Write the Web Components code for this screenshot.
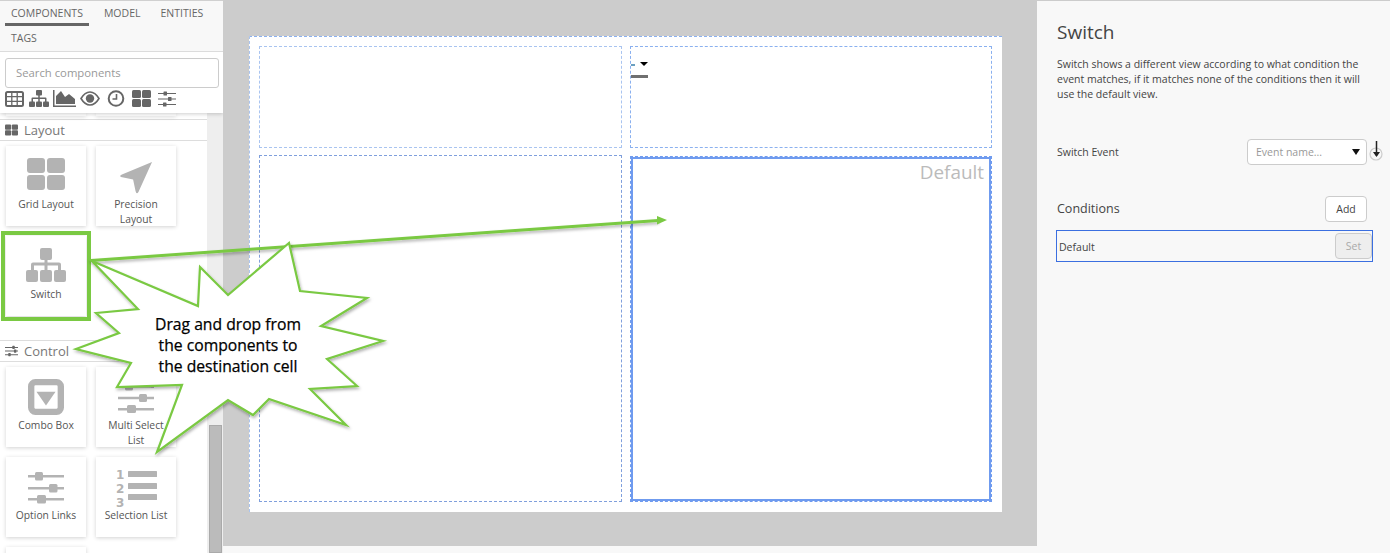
<!DOCTYPE html>
<html>
<head>
<meta charset="utf-8">
<title>Switch</title>
<style>
  html, body { margin: 0; height: 100%; }
  body { overflow: hidden; font-family: "Open Sans", "Liberation Sans", sans-serif; background: #f8f8f8; }
</style>
</head>
<body>
<app-shell>
  <comp-sidebar slot="left">
    <side-section label="Layout" icon="grid" slot="first">
      <comp-tile label="Grid Layout" icon="grid"></comp-tile>
      <comp-tile label="Precision Layout" icon="arrow"></comp-tile>
      <comp-tile label="Switch" icon="tree" picked></comp-tile>
    </side-section>
    <side-section label="Control" icon="sliders">
      <comp-tile label="Combo Box" icon="combo"></comp-tile>
      <comp-tile label="Multi Select List" icon="sliders2"></comp-tile>
      <comp-tile label="Option Links" icon="sliders3"></comp-tile>
      <comp-tile label="Selection List" icon="list"></comp-tile>
      <comp-tile label="" icon=""></comp-tile>
    </side-section>
  </comp-sidebar>
  <design-canvas slot="middle"></design-canvas>
  <prop-panel slot="right"></prop-panel>
</app-shell>
<drag-callout></drag-callout>

<script>
const ICONS = {
  grid: `<svg viewBox="0 0 38 32" fill="currentColor"><rect x="0" y="0" width="18" height="15" rx="3"/><rect x="20" y="0" width="18" height="15" rx="3"/><rect x="0" y="17" width="18" height="15" rx="3"/><rect x="20" y="17" width="18" height="15" rx="3"/></svg>`,
  arrow: `<svg viewBox="0 0 34 34" fill="currentColor"><path d="M33 1 L19 32 Q17 35 16 31 L13.500 19 L1 16.500 Q-1 15 2 14 Z"/></svg>`,
  tree: `<svg viewBox="0 0 40 34" fill="currentColor"><rect x="14" y="0" width="12" height="12" rx="2"/><rect x="0" y="22" width="12" height="12" rx="2"/><rect x="14" y="22" width="12" height="12" rx="2"/><rect x="28" y="22" width="12" height="12" rx="2"/><path d="M18.500 11h3v3.500H33q2 0 2 2V24h-3v-6.500H21.500V24h-3v-6.500H8V24H5v-7.500q0-2 2-2h11.500z"/></svg>`,
  combo: `<svg viewBox="0 0 34 34"><rect x="3" y="3" width="28" height="28" rx="4" fill="#fff" stroke="currentColor" stroke-width="6"/><path d="M8 12h18l-9 13z" fill="currentColor"/></svg>`,
  sliders: `<svg viewBox="0 0 16 14" fill="currentColor"><path d="M0 2h16v1.200H0zM0 6.500h16v1.200H0zM0 11h16v1.200H0z"/><rect x="9" y="0.500" width="3" height="4" rx=".6"/><rect x="11" y="5" width="3" height="4" rx=".6"/><rect x="4" y="9.500" width="3" height="4" rx=".6"/></svg>`,
  sliders2: `<svg viewBox="0 0 36 34" fill="currentColor"><path d="M0 3.500h36v2.500H0zM0 14.800h36v2.500H0zM0 26h36v2.500H0z"/><rect x="7" y="0.500" width="8" height="8" rx="1.500"/><rect x="21" y="12" width="8" height="8" rx="1.500"/><rect x="9" y="23" width="9" height="8" rx="1.500"/></svg>`,
  sliders3: `<svg viewBox="0 0 36 34" fill="currentColor"><path d="M0 3h36v2.500H0zM0 15h36v2.500H0zM0 26h36v2.500H0z"/><rect x="7" y="0" width="8" height="8.500" rx="1.500"/><rect x="21" y="12" width="8.500" height="8.500" rx="1.500"/><rect x="9" y="23" width="9" height="8.500" rx="1.500"/></svg>`,
  list: `<svg viewBox="0 0 41 43" fill="currentColor"><rect x="12" y="4" width="29" height="6" rx=".6"/><rect x="12" y="16" width="29" height="6" rx=".6"/><rect x="12" y="27" width="29" height="6" rx=".6"/><text x="0" y="11.500" font-family="DejaVu Sans, sans-serif" font-weight="700" font-size="12">1</text><text x="0" y="25.500" font-family="DejaVu Sans, sans-serif" font-weight="700" font-size="12">2</text><text x="0" y="39.500" font-family="DejaVu Sans, sans-serif" font-weight="700" font-size="12">3</text></svg>`
}

class AppShell extends HTMLElement {
  constructor () {
    super()
    this.attachShadow({ mode: 'open' })
    this.shadowRoot.innerHTML = `
      <style>
        :host { display: grid; grid-template-columns: 223px 814px 353px; width: 1390px; height: 553px; overflow: hidden; }
        .col { min-height: 0; height: 553px; overflow: hidden; }
      </style>
      <div class="col"><slot name="left"></slot></div>
      <div class="col"><slot name="middle"></slot></div>
      <div class="col"><slot name="right"></slot></div>
    `
  }
}

class CompSidebar extends HTMLElement {
  constructor () {
    super()
    this.attachShadow({ mode: 'open' })
    this.shadowRoot.innerHTML = `
      <style>
        :host { display: block; height: 553px; position: relative; background: #fff; overflow: hidden; }
        .head { position: relative; z-index: 2; height: 113px; background: #fff; box-sizing: border-box; border-top: 1px solid #d0d0d0; box-shadow: 0 1px 4px rgba(0,0,0,.2); display: flex; flex-direction: column; }
        .tabs { display: flex; flex-wrap: wrap; height: 51px; box-sizing: border-box; border-bottom: 1px solid #dcdcdc; background: #f8f8f8; padding-left: 5px; font-size: 10.500px; color: #666; }
        .tab { height: 25px; line-height: 24px; padding: 0 6px; box-sizing: border-box; margin-right: 8px; }
        .tab.on { border-bottom: 3px solid #666; margin-right: 9px; }
        .search { margin: 6px 4px 0 5px; height: 30px; box-sizing: border-box; border: 1px solid #ccc; border-radius: 3px; padding: 0 10px; line-height: 28px; font-size: 11.300px; color: #999; background: #fff; }
        .icons { display: flex; align-items: center; gap: 4px; padding: 2px 0 0 5px; color: #666; }
        .icons svg { display: block; flex: none; }
        .body { display: flex; height: 440px; }
        .list { width: 207px; flex: none; overflow: hidden; }
        .stub { display: flex; gap: 10px; padding-left: 6px; height: 3px; }
        .stub i { display: block; width: 80px; height: 3px; box-shadow: 0 1px 4px rgba(0,0,0,.15); }
        .rail { width: 16px; flex: none; background: #eee; display: flex; flex-direction: column; align-items: center; padding-top: 312px; box-sizing: border-box; }
        .thumb { width: 13px; height: 128px; background: #bbb; border: 1px solid #aaa; box-sizing: border-box; }
      </style>
      <div class="head">
        <div class="tabs">
          <div class="tab on">COMPONENTS</div><div class="tab">MODEL</div><div class="tab">ENTITIES</div><div class="tab">TAGS</div>
        </div>
        <div class="search">Search components</div>
        <div class="icons">
          <svg width="19" height="16" viewBox="0 0 19 16" fill="none" stroke="currentColor"><rect x="1" y="1" width="17" height="14" rx="1.500" stroke-width="2"/><path d="M1 5.700h17M1 10.300h17M6.800 1v14M12.200 1v14" stroke-width="1.300"/></svg>
          <svg width="20" height="17" viewBox="0 0 40 34" fill="currentColor" style="margin-left:1px"><rect x="14" y="0" width="12" height="11" rx="2"/><rect x="0" y="23" width="12" height="11" rx="2"/><rect x="14" y="23" width="12" height="11" rx="2"/><rect x="28" y="23" width="12" height="11" rx="2"/><path d="M18.500 10h3v5H33q2 0 2 2v8h-3v-7H21.500v7h-3v-7H8v7H5v-8q0-2 2-2h11.500z"/></svg>
          <svg width="23" height="17" viewBox="0 0 23 17" fill="currentColor"><path d="M0 0h1.500v15.500H23V17H0z"/><path d="M3 14V6l5-5 4 6 4-3 6 5v5z"/></svg>
          <svg width="20" height="15" viewBox="0 0 20 15"><path d="M1 7.500C4 2.500 7 1 10 1s6 1.500 9 6.500c-3 5-6 6.500-9 6.500s-6-1.500-9-6.500z" fill="none" stroke="currentColor" stroke-width="1.600"/><circle cx="10" cy="7.500" r="4.200" fill="currentColor"/></svg>
          <svg width="18" height="17" viewBox="0 0 18 17" fill="none" stroke="currentColor" stroke-width="2" style="margin-left:3px"><circle cx="9" cy="8.500" r="7.300"/><path d="M9.500 4v5H5.500" stroke-width="1.600"/></svg>
          <svg width="19" height="17" viewBox="0 0 38 34" fill="currentColor" style="margin-left:3px"><rect width="18" height="16" rx="3"/><rect x="20" width="18" height="16" rx="3"/><rect y="18" width="18" height="16" rx="3"/><rect x="20" y="18" width="18" height="16" rx="3"/></svg>
          <svg width="18" height="16" viewBox="0 0 36 32" fill="currentColor" style="margin-left:3px"><path d="M0 4h36v2H0zM0 15h36v2H0zM0 26h36v2H0z"/><rect x="11" y="1" width="7" height="8" rx="1"/><rect x="20" y="12" width="7" height="8" rx="1"/><rect x="10" y="23" width="7" height="8" rx="1"/></svg>
        </div>
      </div>
      <div class="body">
        <div class="list">
          <div class="stub"><i></i><i></i></div>
          <slot name="first"></slot>
          <slot></slot>
        </div>
        <div class="rail"><div class="thumb"></div></div>
      </div>
    `
  }
}

class SideSection extends HTMLElement {
  constructor () {
    super()
    this.attachShadow({ mode: 'open' })
    const icon = ICONS[this.getAttribute('icon')] || ''
    this.shadowRoot.innerHTML = `
      <style>
        :host { display: block; }
        .title { height: 22px; box-sizing: border-box; margin-top: 3px; border-top: 1px solid #ddd; border-bottom: 1px solid #ddd; display: flex; align-items: center; gap: 6px; padding-left: 5px; font-size: 13px; color: #777; }
        .title svg { width: 13px; height: 12px; color: #666; display: block; }
        .tiles { display: grid; grid-template-columns: 80px 80px; gap: 10px; padding: 5px 0 21px 6px; }
      </style>
      <div class="title">${icon}<span>${this.getAttribute('label')}</span></div>
      <div class="tiles"><slot></slot></div>
    `
  }
}

class CompTile extends HTMLElement {
  constructor () {
    super()
    this.attachShadow({ mode: 'open' })
    const icon = ICONS[this.getAttribute('icon')] || ''
    const name = this.getAttribute('icon')
    this.shadowRoot.innerHTML = `
      <style>
        :host { display: block; width: 80px; height: 80px; position: relative; background: #fff; box-shadow: 0 1px 4px rgba(0,0,0,.18); text-align: center; font-size: 10.300px; line-height: 15px; color: #555; }
        :host([picked]) { outline: 4px solid #7ac943; outline-offset: 1px; grid-column: 1; }
        .ic { height: 51px; display: flex; align-items: flex-end; justify-content: center; color: #b3b3b3; }
        .ic svg { display: block; }
        .grid svg { width: 38px; height: 32px; margin-bottom: 7px; }
        .arrow svg { width: 33px; height: 33px; margin-bottom: 3px; }
        .tree svg { width: 40px; height: 34px; margin-bottom: 5px; }
        .combo svg { width: 36px; height: 36px; margin-bottom: 3px; }
        .sliders2 svg, .sliders3 svg { width: 36px; height: 34px; margin-bottom: 2px; }
        .list svg { width: 41px; height: 43px; margin-bottom: -2px; }
        .name { padding: 0 6px; }
      </style>
      <div class="ic ${name}">${icon}</div>
      <div class="name">${this.getAttribute('label')}</div>
    `
  }
}

class DesignCell extends HTMLElement {
  constructor () {
    super()
    this.attachShadow({ mode: 'open' })
    this.shadowRoot.innerHTML = `
      <style>
        :host { display: block; box-sizing: border-box; border: 1px dashed #7f9fdc; position: relative; min-height: 0; }
        :host([top]) { border-color: #a9c4f0; }
        :host([blue]) { border-color: #8ab0ef; }
        :host([active]) { margin-top: 1px; border: 1px dashed #6f9bef; outline: 2px solid #6f9bef; outline-offset: -3px; }
      </style>
      <slot></slot>
    `
  }
}

class DesignCanvas extends HTMLElement {
  constructor () {
    super()
    this.attachShadow({ mode: 'open' })
    this.shadowRoot.innerHTML = `
      <style>
        :host { display: block; height: 553px; background: #f8f8f8; }
        .gray { height: 546px; background: #ccc; padding: 36px 35px 0 26px; box-sizing: border-box; }
        .page { height: 476px; width: 753px; background: #fff; box-sizing: border-box; border-top: 1px dashed #8ab0ef; border-left: 1px dashed #a9c4f0; padding: 9px 10px 10px 9px; display: grid; grid-template-columns: 363px 362px; grid-template-rows: 102px 347px; column-gap: 8px; row-gap: 7px; }
        .combo { display: flex; flex-direction: column; padding-top: 15px; width: 18px; }
        .pick { display: flex; align-items: flex-end; }
        .dot { width: 4px; height: 2px; background: #6a9fc0; margin-right: 5px; }
        .caret { width: 0; height: 0; border: 4px solid transparent; border-top: 4px solid #000; border-bottom: 0; }
        .bar { width: 17px; height: 3px; background: #707070; margin-top: 9px; }
        .def { text-align: right; font-size: 18.900px; line-height: 24px; color: #bbb; padding: 3px 7px 0 0; }
      </style>
      <div class="gray">
        <div class="page">
          <design-cell top></design-cell>
          <design-cell blue><div class="combo"><div class="pick"><div class="dot"></div><div class="caret"></div></div><div class="bar"></div></div></design-cell>
          <design-cell></design-cell>
          <design-cell active><div class="def">Default</div></design-cell>
        </div>
      </div>
    `
  }
}

class PropPanel extends HTMLElement {
  constructor () {
    super()
    this.attachShadow({ mode: 'open' })
    this.shadowRoot.innerHTML = `
      <style>
        :host { display: block; height: 553px; box-sizing: border-box; background: #f8f8f8; border-top: 1px solid #ccc; padding: 0 17px 0 20px; color: #444; font-size: 10.500px; }
        h1 { font-weight: 400; font-size: 19px; line-height: 24px; margin: 19px 0 0; color: #444; }
        p { margin: 13px 0 0; line-height: 15px; width: 310px; }
        .row { display: flex; align-items: center; }
        .ev { margin-top: 37px; height: 26px; width: 310px; }
        .ev .lbl { flex: 1; }
        .sel { width: 120px; height: 26px; box-sizing: border-box; border: 1px solid #ccc; border-radius: 4px; background: #fff; display: flex; align-items: center; justify-content: space-between; padding: 0 6px 0 8px; color: #999; }
        .sel i { width: 0; height: 0; border: 4px solid transparent; border-top: 6px solid #111; border-bottom: 0; }
        .tip { width: 16px; flex: none; margin-right: -16px; height: 26px; }
        .tip svg { display: block; }
        .cond { margin-top: 31px; height: 26px; justify-content: space-between; width: 310px; font-size: 12.500px; }
        .cond .lbl { margin-top: -2px; }
        .btn { width: 42px; height: 26px; box-sizing: border-box; border: 1px solid #ccc; border-radius: 4px; background: #fff; text-align: center; line-height: 24px; font-size: 10.500px; color: #444; }
        .def { margin-top: 8px; width: 317px; margin-left: -1px; height: 32px; box-sizing: border-box; border: 1px solid #3b6fe0; justify-content: space-between; padding: 2px 0 0 2px; background: #f8f8f8; }
        .set { width: 37px; height: 26px; box-sizing: border-box; border: 1px solid #ccc; border-radius: 4px; background: #eee; color: #aaa; text-align: center; line-height: 24px; margin-top: -2px; }
      </style>
      <h1>Switch</h1>
      <p>Switch shows a different view according to what condition the event matches, if it matches none of the conditions then it will use the default view.</p>
      <div class="row ev">
        <div class="lbl">Switch Event</div>
        <div class="sel">Event name...<i></i></div>
        <div class="tip"><svg width="16" height="24" viewBox="0 0 16 24" fill="none"><circle cx="9" cy="15" r="6" stroke="#ccc" stroke-width="1.200"/><path d="M9.500 2v15" stroke="#222" stroke-width="1.500"/><path d="M6 13h7l-3.500 5z" fill="#222"/></svg></div>
      </div>
      <div class="row cond"><div class="lbl">Conditions</div><div class="btn">Add</div></div>
      <div class="row def"><div>Default</div><div class="set">Set</div></div>
    `
  }
}

class DragCallout extends HTMLElement {
  constructor () {
    super()
    this.attachShadow({ mode: 'open' })
    this.shadowRoot.innerHTML = `
      <style>
        :host { position: absolute; left: 0; top: 0; width: 1390px; height: 553px; display: block; pointer-events: none; z-index: 5; }
        svg { position: absolute; left: 0; top: 0; }
        .txt { position: absolute; left: 118px; top: 314px; width: 220px; text-align: center; font-size: 15.700px; line-height: 21px; color: #000; -webkit-text-stroke: .25px #000; }
      </style>
      <svg width="1390" height="553">
        <defs><filter id="s" x="-10%" y="-10%" width="120%" height="120%"><feDropShadow dx="1" dy="2" stdDeviation="1.500" flood-color="#000" flood-opacity=".3"/></filter></defs>
        <path d="M91 260.500 L658 220.500" stroke="#7ac943" stroke-width="3" filter="url(#s)"/>
        <path d="M667 220 L657 216 L657 224.500 Z" fill="#7ac943"/>
        <polygon filter="url(#s)" fill="#fff" stroke="#7ac943" stroke-width="2.200" stroke-linejoin="miter" stroke-miterlimit="20"
          points="92,261 198,306 200,267 228,295 289,243 300,291 367,298 321,326 383,341 327,359 357,386 310,389 346,425 269,399 253,415 228,400 157,452 182,385 117,387 131,363 76,349 119,333 96,313 138,309"/>
      </svg>
      <div class="txt">Drag and drop from<br>the components to<br>the destination cell</div>
    `
  }
}

customElements.define('app-shell', AppShell)
customElements.define('comp-sidebar', CompSidebar)
customElements.define('side-section', SideSection)
customElements.define('comp-tile', CompTile)
customElements.define('design-cell', DesignCell)
customElements.define('design-canvas', DesignCanvas)
customElements.define('prop-panel', PropPanel)
customElements.define('drag-callout', DragCallout)
</script>
</body>
</html>
